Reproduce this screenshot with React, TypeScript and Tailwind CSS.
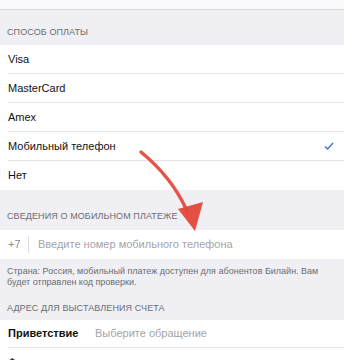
import React from 'react';

const options = ['Visa', 'MasterCard', 'Amex', 'Мобильный телефон', 'Нет'];

const SectionLabel = ({ children, className = '' }: { children: React.ReactNode; className?: string }) => (
  <div className={`px-[7px] text-[9px] uppercase tracking-[0.1px] text-[#6d6d72] ${className}`}>{children}</div>
);

const Arrow = () => (
  <svg className="pointer-events-none absolute left-0 top-0" width="344" height="360" viewBox="0 0 344 360">
    <path d="M141 152 C 158 166, 176 186, 187 211" fill="none" stroke="#e4473a" strokeWidth="3.5" strokeLinecap="round" opacity="0.92" />
    <polygon points="178,209 203,202 195,231" fill="#e4473a" opacity="0.95" />
  </svg>
);

export default function App() {
  return (
    <div className="relative h-[360px] w-[344px] overflow-hidden bg-[#efeff4] font-['Liberation_Sans','Helvetica',sans-serif]">
      {/* row above, scrolled off */}
      <div className="h-[10px] border-b border-[#d8d8dc] bg-[#fbfbfb]" />

      {/* Способ оплаты */}
      <div className="flex h-[35px] items-end pb-[6px]">
        <SectionLabel>Способ оплаты</SectionLabel>
      </div>
      <div className="bg-white">
        {options.map((opt, i) => (
          <div key={opt} className="pl-[8px]">
            <div
              className={`flex h-[29px] items-center pr-[10px] text-[11px] text-[#111] ${
                i < options.length - 1 ? 'border-b border-[#e3e3e6]' : ''
              }`}
            >
              <span className="flex-1">{opt}</span>
              {opt === 'Мобильный телефон' && (
                <svg width="10" height="8" viewBox="0 0 10 8">
                  <polyline points="1,4.5 3.6,7 9,1" fill="none" stroke="#3b73d1" strokeWidth="1.4" />
                </svg>
              )}
            </div>
          </div>
        ))}
      </div>

      {/* Сведения о мобильном платеже */}
      <div className="flex h-[40px] items-end pb-[7px]">
        <SectionLabel>Сведения о мобильном платеже</SectionLabel>
      </div>
      <div className="flex h-[29px] items-center bg-white pl-[8px] text-[11px]">
        <span className="w-[20px] text-[#8e8e93]">+7</span>
        <div className="h-[17px] w-px bg-[#dcdcdf]" />
        <span className="pl-[9px] text-[#a4a4a9]">Введите номер мобильного телефона</span>
      </div>
      <div className="px-[7px] pt-[7px] text-[9px] leading-[11px] text-[#6d6d72]">
        Страна: Россия, мобильный платеж доступен для абонентов Билайн. Вам будет отправлен код проверки.
      </div>

      {/* Адрес для выставления счета */}
      <div className="flex h-[32px] items-end pb-[5px]">
        <SectionLabel>Адрес для выставления счета</SectionLabel>
      </div>
      <div className="bg-white pl-[8px]">
        <div className="flex h-[28px] items-center border-b border-[#e3e3e6] text-[11px]">
          <span className="w-[87px] font-semibold text-[#111]">Приветствие</span>
          <span className="text-[#a4a4a9]">Выберите обращение</span>
        </div>
        <div className="flex h-[29px] items-center text-[11px] text-[#111]">Фамилия</div>
      </div>

      <Arrow />
    </div>
  );
}
